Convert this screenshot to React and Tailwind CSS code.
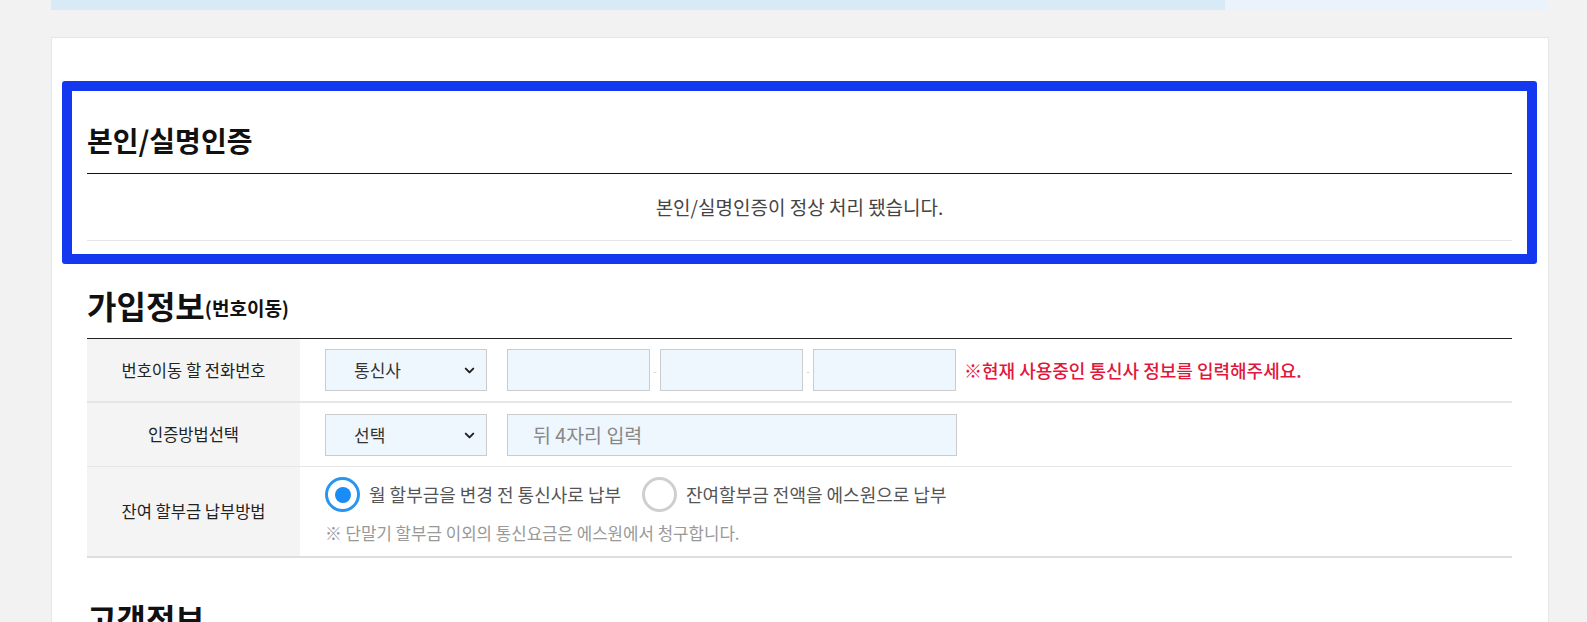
import React, { useState } from "react";
import { ChevronDown } from "lucide-react";

const font = "font-['Noto_Sans_CJK_KR','Noto_Sans',sans-serif]";

const Select = ({ value, options }) => (
  <div className="relative w-[162px] h-[42px]">
    <select
      defaultValue={value}
      className="appearance-none w-full h-full bg-[#eef7fd] border border-[#cccccc] pl-[28px] pr-8 text-[17px] text-[#333] outline-none"
    >
      {options.map((o) => (
        <option key={o}>{o}</option>
      ))}
    </select>
    <ChevronDown
      size={15}
      strokeWidth={3.2}
      className="absolute right-[10px] top-[14px] text-[#222] pointer-events-none"
    />
  </div>
);

const Radio = ({ checked, label, onClick }) => (
  <button type="button" onClick={onClick} className="flex items-center gap-[9px]">
    <span
      className={`w-[35px] h-[35px] rounded-full border-[3px] flex items-center justify-center bg-white ${
        checked ? "border-[#2a95f0]" : "border-[#cfcfcf]"
      }`}
    >
      {checked && <span className="w-[16px] h-[16px] rounded-full bg-[#1a8cf5]" />}
    </span>
    <span className="text-[18px] text-[#555]">{label}</span>
  </button>
);

const Row = ({ label, children, className = "" }) => (
  <div className={`flex ${className}`}>
    <div className="w-[213px] shrink-0 bg-[#f4f4f4] flex items-center justify-center text-[16.5px] text-[#222]">
      {label}
    </div>
    <div className="flex-1 pl-[25px] flex items-center">{children}</div>
  </div>
);

export default function App() {
  const [pay, setPay] = useState("before");

  return (
    <div className={`min-h-screen bg-[#f2f2f2] ${font}`}>
      {/* top strip */}
      <div className="ml-[51px] w-[1496px] h-[10px] flex">
        <div className="w-[1174px] bg-[#d9eaf7]" />
        <div className="flex-1 bg-[#eaf3fb]" />
      </div>

      {/* card */}
      <div className="ml-[51px] mt-[27px] w-[1498px] bg-white border border-[#e6e6e6] pt-[43px] pl-[10px] pr-[11px] pb-[40px]">
        {/* highlighted box */}
        <section className="border-[10px] border-[#1438f0] rounded-[3px] px-[15px] pt-[33px] pb-[13px]">
          <h2 className="text-[28px] font-bold text-[#111] leading-[32px] pb-[17px] border-b border-[#111]">
            본인/실명인증
          </h2>
          <div className="h-[67px] flex items-center justify-center border-b border-[#e5e5e5] text-[19px] text-[#444]">
            본인/실명인증이 정상 처리 됐습니다.
          </div>
        </section>

        {/* join info */}
        <section className="px-[25px] pt-[23px]">
          <h2 className="flex items-end leading-[36px] pb-[15px] text-[#111] font-bold">
            <span className="text-[32px]">가입정보</span>
            <span className="text-[19px] leading-[30px]">(번호이동)</span>
          </h2>
          <div className="border-t border-[#222]">
            <Row label="번호이동 할 전화번호" className="h-[64px] border-b-2 border-[#e6e6e6]">
              <Select value="통신사" options={["통신사", "SKT", "KT", "LG U+"]} />
              <div className="ml-[20px] flex items-center">
                <input className="w-[143px] h-[42px] bg-[#eef7fd] border border-[#cccccc] outline-none" />
                <span className="w-[10px] text-center text-[10px] text-[#ccc]">-</span>
                <input className="w-[143px] h-[42px] bg-[#eef7fd] border border-[#cccccc] outline-none" />
                <span className="w-[10px] text-center text-[10px] text-[#ccc]">-</span>
                <input className="w-[143px] h-[42px] bg-[#eef7fd] border border-[#cccccc] outline-none" />
              </div>
              <span className="ml-[8px] text-[18px] font-medium text-[#e1173c]">
                ※현재 사용중인 통신사 정보를 입력해주세요.
              </span>
            </Row>
            <Row label="인증방법선택" className="h-[64px] border-b border-[#e6e6e6]">
              <Select value="선택" options={["선택", "휴대폰", "카드"]} />
              <input
                placeholder="뒤 4자리 입력"
                className="ml-[20px] w-[450px] h-[42px] bg-[#eef7fd] border border-[#cccccc] pl-[25px] text-[19.5px] text-[#333] placeholder:text-[#888] outline-none"
              />
            </Row>
            <Row label="잔여 할부금 납부방법" className="border-b-2 border-[#dedede]">
              <div className="pt-[10px] pb-[12px]">
                <div className="flex items-center gap-[21px]">
                  <Radio
                    checked={pay === "before"}
                    label="월 할부금을 변경 전 통신사로 납부"
                    onClick={() => setPay("before")}
                  />
                  <Radio
                    checked={pay === "all"}
                    label="잔여할부금 전액을 에스원으로 납부"
                    onClick={() => setPay("all")}
                  />
                </div>
                <p className="mt-[10px] text-[16.8px] leading-[22px] text-[#999]">
                  ※ 단말기 할부금 이외의 통신요금은 에스원에서 청구합니다.
                </p>
              </div>
            </Row>
          </div>

          <h2 className="mt-[42px] text-[32px] font-bold text-[#111] leading-[36px]">고객정보</h2>
        </section>
      </div>
    </div>
  );
}
